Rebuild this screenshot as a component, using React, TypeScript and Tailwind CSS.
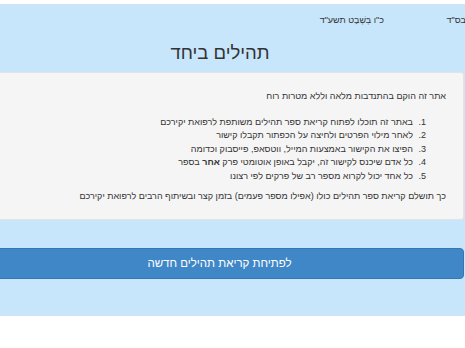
const items = [
  <>באתר זה תוכלו לפתוח קריאת ספר תהילים משותפת לרפואת יקירכם</>,
  <>לאחר מילוי הפרטים ולחיצה על הכפתור תקבלו קישור</>,
  <>הפיצו את הקישור באמצעות המייל, ווטסאפ, פייסבוק וכדומה</>,
  <>
    כל אדם שיכנס לקישור זה, יקבל באופן אוטומטי פרק <b>אחר</b> בספר
  </>,
  <>כל אחד יכול לקרוא מספר רב של פרקים לפי רצונו</>,
];

export default function App() {
  return (
    <div
      dir="rtl"
      className="w-[465px] h-[348px] overflow-hidden bg-white text-[#333] font-['Liberation_Sans',Arial,sans-serif]"
    >
      <div className="mt-1 h-[312px] bg-[#c8e6fb] -ml-[25px] flex flex-col">
        {/* header row */}
        <div className="flex items-center h-[32px] pt-[1px] text-[9px] leading-none -mr-[1px]">
          <span className="w-[82px]">בס"ד</span>
          <span>כ"ו בְּשְׁבָט תשע"ד</span>
        </div>

        <h1 className="text-center text-[18.5px] leading-none h-[36px] pt-[8px]">
          תהילים ביחד
        </h1>

        {/* well */}
        <div className="mr-[1px] h-[148px] bg-[#f5f5f5] border border-[#e3e3e3] rounded-r-[3px] pr-[17px] pt-[17px] text-[9px] leading-[13.5px]">
          <p>אתר זה הוקם בהתנדבות מלאה וללא מטרות רוח</p>
          <ol className="mt-[12px] pr-[30px] list-decimal">
            {items.map((it, i) => (
              <li key={i} className="pr-[3px]">
                {it}
              </li>
            ))}
          </ol>
          <p className="mt-[7px]">
            כך תושלם קריאת ספר תהילים כולו (אפילו מספר פעמים) בזמן קצר ובשיתוף הרבים לרפואת יקירכם
          </p>
        </div>

        <div className="mt-[28px] mr-[1px] h-[31px] bg-[#3f87c7] border border-[#3677b3] rounded-r-[4px] flex items-center justify-center text-white text-[11.5px]">
          לפתיחת קריאת תהילים חדשה
        </div>
      </div>
    </div>
  );
}
